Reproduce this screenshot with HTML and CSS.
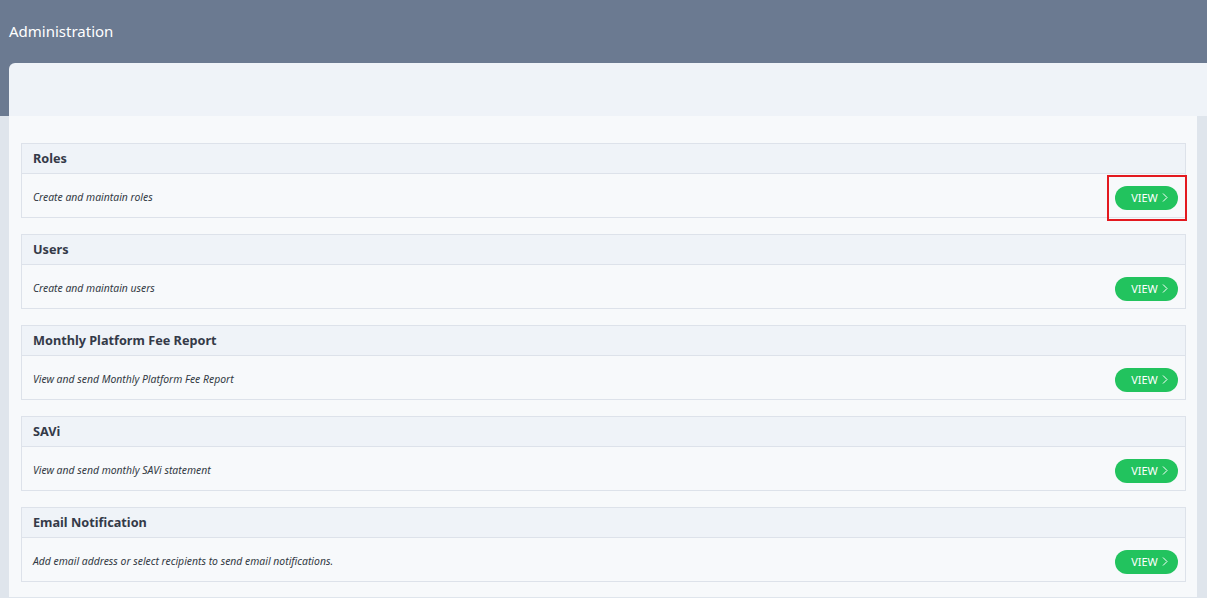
FILE: index.html
```html
<!DOCTYPE html>
<html>
<head>
    <title>Administration</title>
    <link rel="stylesheet" href="styles.css">
</head>
<body>
    <div class="page-head">
        <h1>Administration</h1>
    </div>
    <div class="content">
        <div class="card-tabs"></div>
        <div class="card-body">
            <div class="admin-box">
                <div class="box-head">Roles</div>
                <div class="box-row">
                    <span class="box-desc">Create and maintain roles</span>
                    <button class="view-btn highlighted">VIEW <svg width="6" height="9" viewBox="0 0 6 9"><polyline points="1,0.5 5,4.5 1,8.5" fill="none" stroke="#fff" stroke-width="1"/></svg></button>
                </div>
            </div>
            <div class="admin-box">
                <div class="box-head">Users</div>
                <div class="box-row">
                    <span class="box-desc">Create and maintain users</span>
                    <button class="view-btn">VIEW <svg width="6" height="9" viewBox="0 0 6 9"><polyline points="1,0.5 5,4.5 1,8.5" fill="none" stroke="#fff" stroke-width="1"/></svg></button>
                </div>
            </div>
            <div class="admin-box">
                <div class="box-head">Monthly Platform Fee Report</div>
                <div class="box-row">
                    <span class="box-desc">View and send Monthly Platform Fee Report</span>
                    <button class="view-btn">VIEW <svg width="6" height="9" viewBox="0 0 6 9"><polyline points="1,0.5 5,4.5 1,8.5" fill="none" stroke="#fff" stroke-width="1"/></svg></button>
                </div>
            </div>
            <div class="admin-box">
                <div class="box-head">SAVi</div>
                <div class="box-row">
                    <span class="box-desc">View and send monthly SAVi statement</span>
                    <button class="view-btn">VIEW <svg width="6" height="9" viewBox="0 0 6 9"><polyline points="1,0.5 5,4.5 1,8.5" fill="none" stroke="#fff" stroke-width="1"/></svg></button>
                </div>
            </div>
            <div class="admin-box">
                <div class="box-head">Email Notification</div>
                <div class="box-row">
                    <span class="box-desc">Add email address or select recipients to send email notifications.</span>
                    <button class="view-btn">VIEW <svg width="6" height="9" viewBox="0 0 6 9"><polyline points="1,0.5 5,4.5 1,8.5" fill="none" stroke="#fff" stroke-width="1"/></svg></button>
                </div>
            </div>
        </div>
    </div>
</body>
</html>
```

FILE: styles.css
```css
body {
    margin: 0;
    font-family: "Noto Sans", "Open Sans", sans-serif;
    background-color: #dfe5ec;
    overflow: hidden;
}
.page-head {
    height: 63px;
    background-color: #6b7a91;
}
h1 {
    margin: 0;
    padding: 21px 0 0 9px;
    font-size: 15px;
    font-weight: normal;
    line-height: 20px;
    color: #fff;
}
.content {
    padding-left: 9px;
    background: linear-gradient(to bottom, #6b7a91 53px, #dfe5ec 53px);
}
.card-tabs {
    height: 53px;
    background-color: #eff3f8;
    border-top-left-radius: 6px;
}
.card-body {
    margin-right: 10px;
    padding: 27px 11px 15px 12px;
    background-color: #f7f9fb;
    display: flex;
    flex-direction: column;
    gap: 16px;
}
.admin-box {
    border: 1px solid #dde2ea;
}
.box-head {
    height: 29px;
    line-height: 29px;
    padding-left: 11px;
    background-color: #eff3f8;
    border-bottom: 1px solid #dde2ea;
    font-size: 12.7px;
    font-weight: bold;
    color: #343a48;
}
.box-row {
    height: 43px;
    display: flex;
    align-items: center;
    justify-content: space-between;
    padding: 0 7px 0 11px;
}
.box-desc {
    font-size: 10.4px;
    font-style: italic;
    color: #333a44;
    padding-top: 3px;
}
.view-btn {
    position: relative;
    width: 63px;
    height: 24px;
    margin-top: 4px;
    padding: 0 0 0 6px;
    border: none;
    border-radius: 12px;
    background-color: #22c35e;
    color: #fff;
    font-family: "Noto Sans", "Open Sans", sans-serif;
    font-size: 11px;
    display: flex;
    align-items: center;
    justify-content: center;
    gap: 4px;
    cursor: pointer;
}
.highlighted::after {
    content: "";
    position: absolute;
    left: -8px;
    right: -9px;
    top: -11px;
    bottom: -11px;
    border: 2px solid #e3191f;
}
```
